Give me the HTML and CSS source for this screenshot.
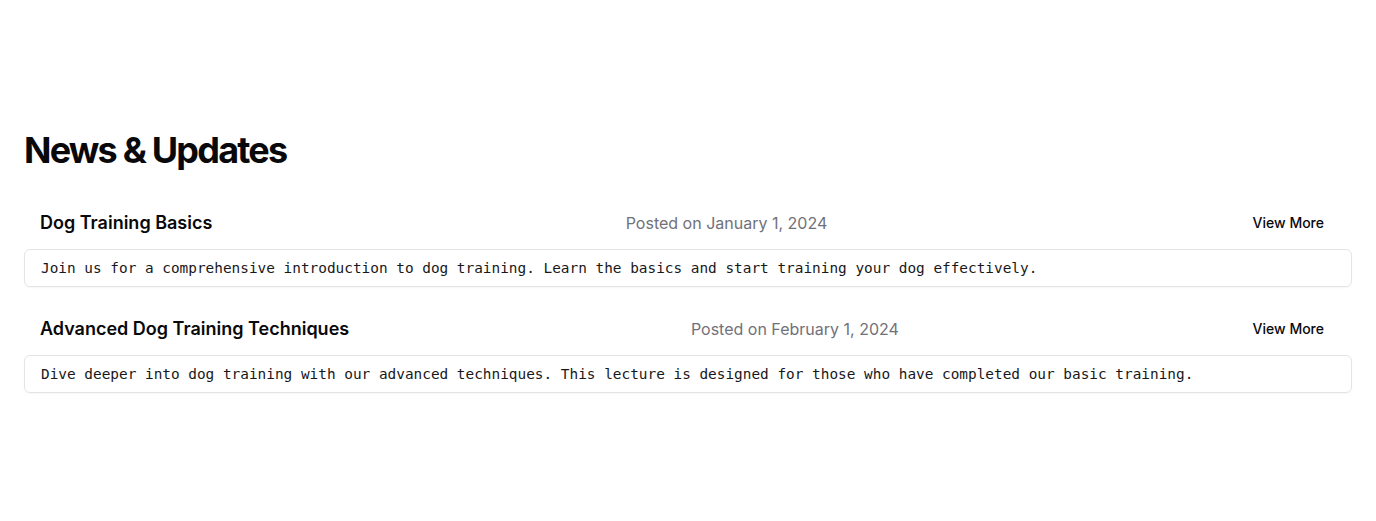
FILE: index.html
```html
<!DOCTYPE html>
<html lang="en">
<head>
<meta charset="utf-8">
<title>News &amp; Updates</title>
<link rel="stylesheet" href="styles.css">
</head>
<body>
<main class="page">
  <h1 class="page-title">News &amp; Updates</h1>
  <div class="news-list">
    <article class="news-item">
      <div class="news-header">
        <h2 class="news-title">Dog Training Basics</h2>
        <span class="news-date">Posted on January 1, 2024</span>
        <button class="news-more">View More</button>
      </div>
      <div class="news-body">Join us for a comprehensive introduction to dog training. Learn the basics and start training your dog effectively.</div>
    </article>
    <article class="news-item">
      <div class="news-header">
        <h2 class="news-title">Advanced Dog Training Techniques</h2>
        <span class="news-date">Posted on February 1, 2024</span>
        <button class="news-more">View More</button>
      </div>
      <div class="news-body">Dive deeper into dog training with our advanced techniques. This lecture is designed for those who have completed our basic training.</div>
    </article>
  </div>
</main>
</body>
</html>
```

FILE: styles.css
```css
* { box-sizing: border-box; }
html, body { margin: 0; padding: 0; background: #ffffff; }
body { font-family: Inter, "Noto Sans", sans-serif; color: #0a0a0a; }

.page { padding: 130px 24px 24px; }

.page-title {
  margin: 0 0 27px;
  font-size: 36px;
  line-height: 40px;
  font-weight: 700;
  letter-spacing: -0.05em;
  color: #09090b;
}

.news-list { display: flex; flex-direction: column; gap: 16px; }

.news-header {
  display: flex;
  align-items: center;
  justify-content: space-between;
  height: 52px;
  padding: 0 16px;
}

.news-title {
  margin: 0;
  font-size: 18px;
  line-height: 28px;
  font-weight: 600;
  color: #09090b;
}

.news-date { font-size: 16px; line-height: 24px; color: #71717a; }

.news-more {
  border: 0;
  background: transparent;
  font-family: inherit;
  font-size: 14px;
  line-height: 20px;
  font-weight: 500;
  color: #09090b;
  padding: 4px 12px;
  cursor: pointer;
}

.news-body {
  border: 1px solid #e4e4e7;
  border-radius: 6px;
  box-shadow: 0 1px 2px rgba(0,0,0,0.04);
  padding: 8px 16px;
  font-family: "DejaVu Sans Mono", monospace;
  font-size: 14.4px;
  line-height: 20px;
  color: #18181b;
}
```
